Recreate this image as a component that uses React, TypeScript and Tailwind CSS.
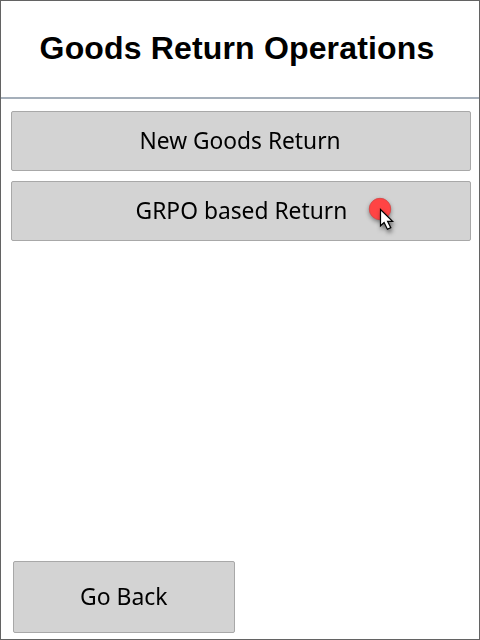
import React from "react";

const buttonClass =
  "flex items-center justify-center rounded-[2px] border border-[#a8a8a8] bg-[#d3d3d3] pb-[2px] font-['Noto_Sans',sans-serif] text-[24px] leading-none whitespace-nowrap text-black";

function Pointer() {
  return (
    <svg className="absolute top-[10px] left-[352px]" width="40" height="46" viewBox="363 191 40 46">
      <circle
        cx="380"
        cy="209"
        r="10.7"
        fill="#ff4444"
        stroke="#d94848"
        className="drop-shadow-[0px_2px_2px_rgba(0,0,0,0.4)]"
      />
      <path
        d="M380.5 209.5v16.3l3.6-3.3 3.3 6.7 3.4-1.6-3.2-6.2h5z"
        fill="white"
        stroke="black"
        strokeWidth="1.2"
        className="drop-shadow-[1px_3px_2px_rgba(0,0,0,0.5)]"
      />
    </svg>
  );
}

export default function App() {
  return (
    <main className="flex h-[640px] w-[480px] flex-col border border-[#636363] bg-white">
      <header className="flex h-[98px] items-center justify-center border-b-2 border-[#a5afba] pr-[6px] pb-[2px]">
        <h1 className="font-['Liberation_Sans',sans-serif] text-[32px] leading-none font-bold tracking-[0.16px] whitespace-nowrap text-black">
          Goods Return Operations
        </h1>
      </header>
      <section className="flex flex-1 flex-col gap-[10px] px-[10px] pt-3">
        <button className={`${buttonClass} h-[60px] w-[460px]`}>
          <span className="mr-[2px] scale-x-[0.948]">New Goods Return</span>
        </button>
        <div className="relative">
          <button className={`${buttonClass} h-[60px] w-[460px]`}>
            <span className="scale-x-[0.95]">GRPO based Return</span>
          </button>
          <Pointer />
        </div>
      </section>
      <footer className="px-3 pb-[6px]">
        <button className={`${buttonClass} h-[72px] w-[222px]`}>
          <span className="scale-x-[0.956]">Go Back</span>
        </button>
      </footer>
    </main>
  );
}
